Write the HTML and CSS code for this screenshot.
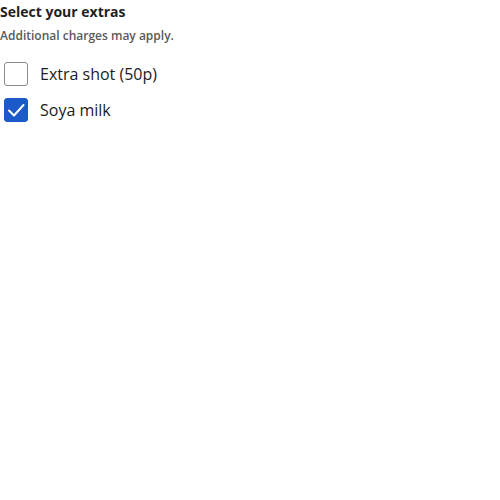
FILE: index.html
```html
<!DOCTYPE html>
<html>
<head>
<meta charset="utf-8">
<link rel="stylesheet" href="styles.css">
</head>
<body>
<fieldset class="group">
  <legend class="title">Select your extras</legend>
  <p class="hint">Additional charges may apply.</p>
  <div class="options">
    <label class="option">
      <span class="box"></span>
      <span class="label">Extra shot (50p)</span>
    </label>
    <label class="option">
      <span class="box checked">
        <svg viewBox="0 0 24 24" width="24" height="24"><path d="M5 12.5 L10 17.5 L19.5 7" fill="none" stroke="#fff" stroke-width="2" stroke-linecap="round" stroke-linejoin="round"/></svg>
      </span>
      <span class="label">Soya milk</span>
    </label>
  </div>
</fieldset>
</body>
</html>
```
FILE: styles.css
```css
html, body {
  margin: 0;
  padding: 0;
  background: #fff;
}
body {
  font-family: "Open Sans", "Liberation Sans", sans-serif;
  color: #1c1c1c;
}
.group {
  border: 0;
  margin: 0;
  padding: 0;
}
.title {
  padding: 0;
  font-size: 14px;
  font-weight: 700;
  line-height: 24px;
  color: #1f1f1f;
}
.hint {
  margin: 0;
  font-size: 12px;
  font-weight: 600;
  line-height: 24px;
  color: #595959;
}
.options {
  display: flex;
  flex-direction: column;
  gap: 12px;
  padding: 14px 0 0 4px;
}
.option {
  display: flex;
  align-items: center;
  gap: 12px;
  height: 24px;
}
.box {
  width: 22px;
  height: 22px;
  border: 1px solid #8a8a8a;
  border-radius: 3px;
  background: #fff;
  position: relative;
}
.box.checked {
  background: #1b5ac8;
  border-color: #1b5ac8;
}
.box svg {
  position: absolute;
  left: -1px;
  top: -1px;
}
.label {
  font-size: 16px;
  line-height: 24px;
  color: #1c1c1c;
}
```
